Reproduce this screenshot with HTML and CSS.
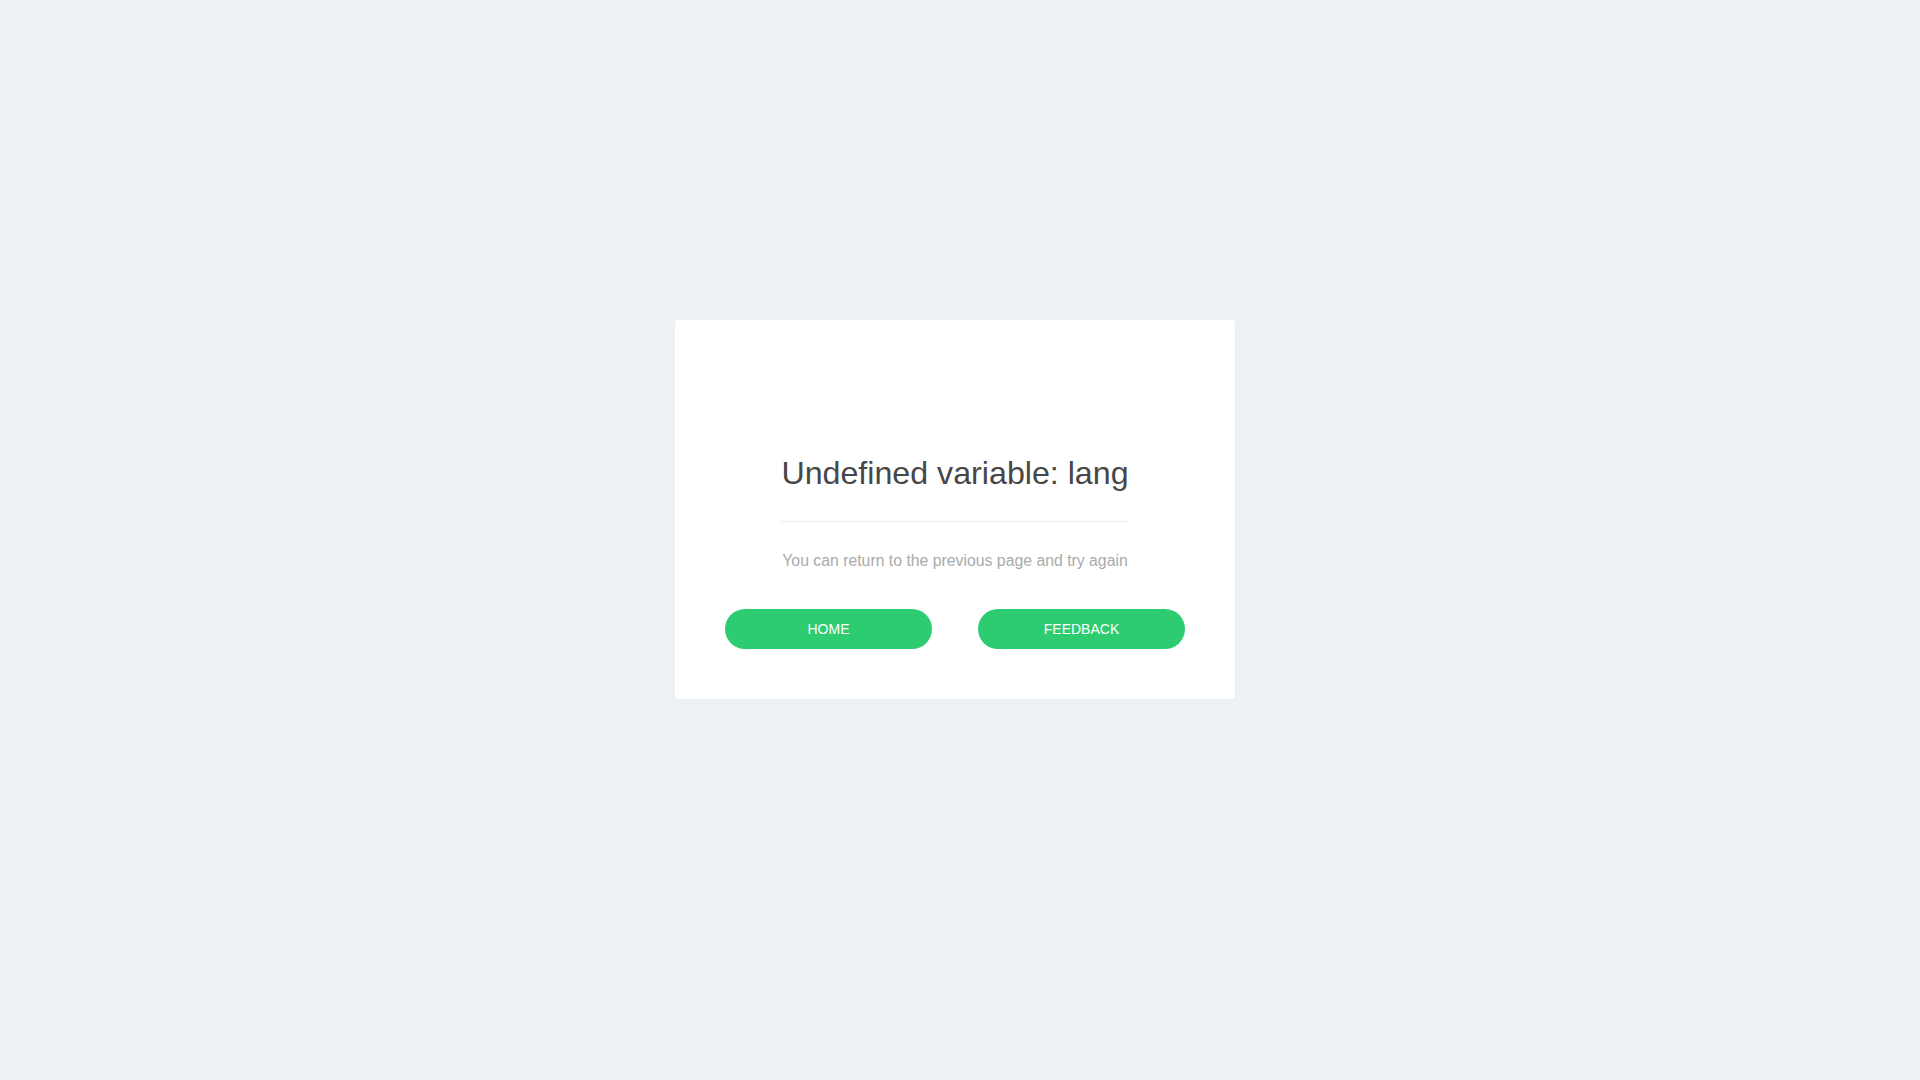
FILE: index.html
```html
<!DOCTYPE html>
<html lang="en">
<head>
<meta charset="utf-8">
<title>Error</title>
<link rel="stylesheet" href="styles.css">
</head>
<body>
<div class="page">
  <div class="card">
    <h1 class="title">Undefined variable: lang</h1>
    <div class="divider"></div>
    <p class="subtitle">You can return to the previous page and try again</p>
    <div class="actions">
      <a class="btn" href="#">HOME</a>
      <a class="btn" href="#">FEEDBACK</a>
    </div>
  </div>
</div>
</body>
</html>
```

FILE: styles.css
```css
html, body {
  margin: 0;
  padding: 0;
  height: 100%;
}
body {
  background: #edf1f4;
  font-family: "Liberation Sans", Arial, sans-serif;
}
.page {
  padding: 320px 10px 0 0;
}
.card {
  box-sizing: border-box;
  width: 560px;
  margin: 0 auto;
  background: #ffffff;
  border-radius: 3px;
  padding: 135px 50px 50px;
  text-align: center;
}
.title {
  margin: 0;
  font-size: 32.2px;
  line-height: 36px;
  font-weight: normal;
  color: #474747;
}
.divider {
  width: 350px;
  height: 1px;
  background: #eeeeee;
  margin: 30px auto 0;
}
.subtitle {
  margin: 29px 0 0;
  font-size: 15.8px;
  line-height: 20px;
  color: #aaaaaa;
}
.actions {
  display: flex;
  justify-content: space-between;
  margin-top: 38px;
}
.btn {
  width: 207px;
  height: 40px;
  line-height: 40px;
  border-radius: 20px;
  background: #2ecc71;
  color: #ffffff;
  font-size: 14px;
  text-decoration: none;
  text-align: center;
}
```
